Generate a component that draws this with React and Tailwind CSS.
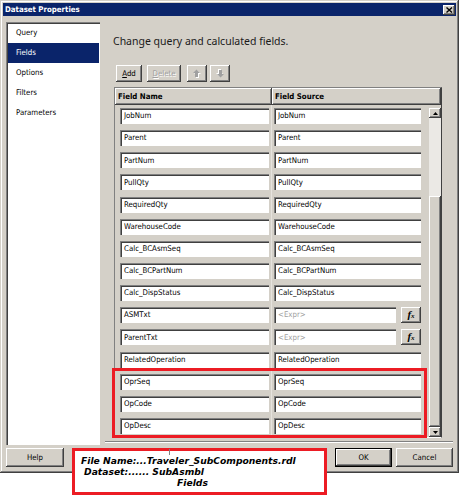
const RAISED = "shadow-[inset_-1px_-1px_0_#404040,inset_1px_1px_0_#ffffff,inset_-2px_-2px_0_#808080]";
const SUNKEN = "shadow-[inset_1px_1px_0_#808080,inset_2px_2px_0_#404040,inset_-1px_-1px_0_#ffffff]";
const HDR = "shadow-[inset_-1px_-1px_0_#404040,inset_1px_1px_0_#ffffff,inset_-2px_-2px_0_#808080]";

const rows = [
  ["JobNum", "JobNum"],
  ["Parent", "Parent"],
  ["PartNum", "PartNum"],
  ["PullQty", "PullQty"],
  ["RequiredQty", "RequiredQty"],
  ["WarehouseCode", "WarehouseCode"],
  ["Calc_BCAsmSeq", "Calc_BCAsmSeq"],
  ["Calc_BCPartNum", "Calc_BCPartNum"],
  ["Calc_DispStatus", "Calc_DispStatus"],
  ["ASMTxt", null],
  ["ParentTxt", null],
  ["RelatedOperation", "RelatedOperation"],
  ["OprSeq", "OprSeq"],
  ["OpCode", "OpCode"],
  ["OpDesc", "OpDesc"],
];

function Box({ children, w, muted }) {
  return (
    <div
      className={`h-[16px] bg-white ${SUNKEN} flex items-center pl-[4px] ${muted ? "text-[#a0a0a0]" : "text-black"}`}
      style={{ width: w }}
    >
      {children}
    </div>
  );
}

function Arrow({ down }) {
  return (
    <svg width="8" height="9" viewBox="0 0 8 9">
      <g transform={down ? "rotate(180 4 4.5)" : undefined}>
        <polygon points="4.5,1.5 8,5 6,5 6,9 3,9 3,5 1,5" fill="#ffffff" />
        <polygon points="3.5,0.5 7,4 5,4 5,8 2,8 2,4 0,4" fill="#a0a0a0" />
      </g>
    </svg>
  );
}

export default function App() {
  return (
    <div className="relative w-[460px] h-[500px] bg-white overflow-hidden font-['DejaVu_Sans_Condensed','DejaVu_Sans',sans-serif] text-[7.8px] text-black">
      <div className="w-[459px] h-[473px] bg-[#d4d0c8] flex flex-col shadow-[inset_-1px_-1px_0_#404040,inset_1px_1px_0_#d4d0c8,inset_-2px_-2px_0_#808080,inset_2px_2px_0_#ffffff]">
        {/* Title bar */}
        <div className="mx-[3px] mt-[3px] h-[13px] bg-[#0a246a] flex items-center justify-between pl-[2px] pr-[1px]">
          <span className="text-white font-bold leading-none">Dataset Properties</span>
          <div className={`w-[12px] h-[10px] bg-[#d4d0c8] ${RAISED} flex items-center justify-center`}>
            <svg width="7" height="6" viewBox="0 0 7 6">
              <path d="M0.5 0.5 L6 5.5 M6 0.5 L0.5 5.5" stroke="#000" strokeWidth="1.4" />
            </svg>
          </div>
        </div>

        {/* Body */}
        <div className="flex mt-[6px] pl-[6px]">
          {/* Left column */}
          <div className="w-[94px] flex flex-col">
            <div className={`h-[423px] bg-white ${SUNKEN} pl-[2px] pr-[1px] pt-[1px] flex flex-col`}>
              <div className="h-[20px] flex items-center pl-[8px]">Query</div>
              <div className="h-[20px] flex items-center pl-[8px] bg-[#0a246a] text-white">Fields</div>
              <div className="h-[20px] flex items-center pl-[8px]">Options</div>
              <div className="h-[20px] flex items-center pl-[8px]">Filters</div>
              <div className="h-[20px] flex items-center pl-[8px]">Parameters</div>
            </div>
            <div className={`mt-[3px] h-[19px] w-[58px] ${RAISED} flex items-center justify-center`}>Help</div>
          </div>

          {/* Right column */}
          <div className="ml-[5px] w-[348px] flex flex-col">
            <div className="h-[40px] flex items-center pl-[8px] font-['Noto_Sans',sans-serif] text-[10.5px] text-[#1a1a1a]">
              Change query and calculated fields.
            </div>

            {/* Toolbar */}
            <div className="mt-[3px] h-[17px] flex pl-[11px]">
              <div className={`w-[26px] h-full ${RAISED} flex items-center justify-center`}>
                <span><span className="underline">A</span>dd</span>
              </div>
              <div className={`ml-[5px] w-[34px] h-full ${RAISED} flex items-center justify-center text-[#a0a0a0] [text-shadow:1px_1px_0_#ffffff]`}>
                <span><span className="underline">D</span>elete</span>
              </div>
              <div className={`ml-[6px] w-[20px] h-full ${RAISED} flex items-center justify-center`}>
                <Arrow />
              </div>
              <div className={`ml-[3px] w-[20px] h-full ${RAISED} flex items-center justify-center`}>
                <Arrow down />
              </div>
            </div>

            {/* Grid */}
            <div className="ml-[9px] mt-[5px] w-[328px] h-[351px] border border-[#808080] border-r-[#404040] border-b-[#ffffff] flex flex-col">
              <div className="h-[17px] flex font-bold">
                <div className={`w-[157px] h-full ${HDR} flex items-center pl-[3px]`}>Field Name</div>
                <div className={`flex-1 h-full ${HDR} flex items-center pl-[3px]`}>Field Source</div>
              </div>
              <div className="flex-1 flex">
                <div className="w-[314px] flex flex-col">
                  {rows.map(([name, src]) => (
                    <div key={name} className="flex-1 flex">
                      <div className="w-[157px] flex items-center pl-[5px] border-r border-[#e6e3de]">
                        <Box w={149}>{name}</Box>
                      </div>
                      <div className="flex-1 flex items-center pl-[2px]">
                        {src ? (
                          <Box w={147}>{src}</Box>
                        ) : (
                          <>
                            <Box w={122} muted>&lt;Expr&gt;</Box>
                            <div className={`ml-[5px] w-[20px] h-[16px] ${RAISED} flex items-center justify-center pb-[1px]`}>
                              <span className="font-['Liberation_Serif',serif] font-bold italic text-[11px] leading-none">f</span>
                              <span className="font-['Liberation_Serif',serif] font-bold italic text-[7px] leading-none mt-[3px]">x</span>
                            </div>
                          </>
                        )}
                      </div>
                    </div>
                  ))}
                </div>
                {/* Scrollbar */}
                <div className="w-[12px] pt-[3px] flex flex-col">
                  <div className={`h-[10px] bg-[#d4d0c8] ${RAISED} flex items-center justify-center`}>
                    <svg width="5" height="3" viewBox="0 0 5 3"><polygon points="2.5,0 5,3 0,3" fill="#000" /></svg>
                  </div>
                  <div className="h-[78px] bg-[#ebe9e5]" />
                  <div className={`flex-1 bg-[#d4d0c8] ${RAISED}`} />
                  <div className={`h-[10px] bg-[#d4d0c8] ${RAISED} flex items-center justify-center`}>
                    <svg width="5" height="3" viewBox="0 0 5 3"><polygon points="0,0 5,0 2.5,3" fill="#000" /></svg>
                  </div>
                </div>
              </div>
            </div>

            {/* Separator */}
            <div className="mt-[3px] h-[2px] border-t border-b border-t-[#808080] border-b-[#ffffff]" />

            {/* Buttons */}
            <div className="mt-[5px] h-[19px] flex justify-end">
              <div className={`w-[57px] h-full border border-black ${RAISED} flex items-center justify-center`}>OK</div>
              <div className={`ml-[4px] w-[57px] h-full ${RAISED} flex items-center justify-center`}>Cancel</div>
            </div>
          </div>
        </div>
      </div>

      {/* Annotation: highlight of fields */}
      <div className="absolute left-[112px] top-[368px] w-[315px] h-[70px] border-[3px] border-[#ec1c24]" />

      {/* Annotation: caption */}
      <div className="absolute left-[72px] top-[448px] w-[255px] h-[47px] border-[3px] border-[#ec1c24] bg-white flex flex-col pt-[4px] font-['DejaVu_Sans',sans-serif] font-bold italic text-[9.2px] leading-[11px] text-black">
        <div className="pl-[6px]">File Name:...Traveler_SubComponents.rdl</div>
        <div className="pl-[9px]">Dataset:...... SubAsmbl</div>
        <div className="pl-[102px]">Fields</div>
      </div>
      <div className="absolute left-[169px] top-[449px] w-[1px] h-[6px] bg-[#808080]" />
    </div>
  );
}
